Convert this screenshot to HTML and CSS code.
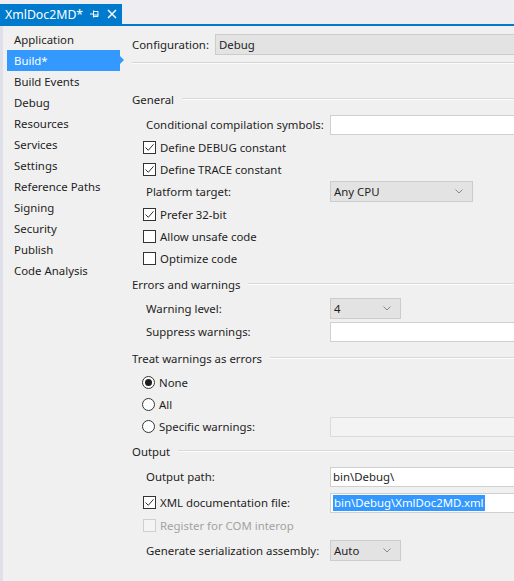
FILE: index.html
```html
<!DOCTYPE html>
<html lang="en">
<head>
    <meta charset="UTF-8">
    <title>XmlDoc2MD - Build</title>
    <link rel="stylesheet" href="styles.css">
</head>
<body>
    <div class="tabstrip">
        <div class="tab">
            <span class="tab-title">XmlDoc2MD*</span>
            <svg class="tab-pin" width="9" height="8" viewBox="0 0 9 8">
                <path d="M0 4h3M3.5 0.5v7M3.5 1.5h4.5v5h-4.5M3.5 5h4.5" fill="none" stroke="#fff" stroke-width="1"/>
            </svg>
            <svg class="tab-close" width="10" height="10" viewBox="0 0 10 10">
                <path d="M1 1l8 8M9 1l-8 8" stroke="#fff" stroke-width="1.5"/>
            </svg>
        </div>
    </div>

    <div class="main">
        <ul class="nav">
            <li>Application</li>
            <li class="active">Build*</li>
            <li>Build Events</li>
            <li>Debug</li>
            <li>Resources</li>
            <li>Services</li>
            <li>Settings</li>
            <li>Reference Paths</li>
            <li>Signing</li>
            <li>Security</li>
            <li>Publish</li>
            <li>Code Analysis</li>
        </ul>

        <div class="content">
            <div class="config-row">
                <span class="config-label">Configuration:</span>
                <div class="combo wide">Debug</div>
            </div>
            <div class="separator"></div>

            <!-- General -->
            <div class="section first">General<span class="rule"></span></div>
            <div class="row field">
                <span class="label">Conditional compilation symbols:</span>
                <div class="textbox wide"></div>
            </div>
            <div class="row">
                <span class="check on"><svg width="11" height="11" viewBox="0 0 11 11"><path d="M1.5 5.5l2.8 2.8 5.2-6" fill="none" stroke="#333" stroke-width="1"/></svg></span>
                <span>Define DEBUG constant</span>
            </div>
            <div class="row">
                <span class="check on"><svg width="11" height="11" viewBox="0 0 11 11"><path d="M1.5 5.5l2.8 2.8 5.2-6" fill="none" stroke="#333" stroke-width="1"/></svg></span>
                <span>Define TRACE constant</span>
            </div>
            <div class="row field">
                <span class="label">Platform target:</span>
                <div class="combo platform">Any CPU
                    <svg class="chevron" width="8" height="5" viewBox="0 0 8 5"><path d="M0.5 0.5l3.5 3.5 3.5-3.5" fill="none" stroke="#888" stroke-width="1"/></svg>
                </div>
            </div>
            <div class="row">
                <span class="check on"><svg width="11" height="11" viewBox="0 0 11 11"><path d="M1.5 5.5l2.8 2.8 5.2-6" fill="none" stroke="#333" stroke-width="1"/></svg></span>
                <span>Prefer 32-bit</span>
            </div>
            <div class="row">
                <span class="check"></span>
                <span>Allow unsafe code</span>
            </div>
            <div class="row">
                <span class="check"></span>
                <span>Optimize code</span>
            </div>

            <!-- Errors and warnings -->
            <div class="section">Errors and warnings<span class="rule"></span></div>
            <div class="row field">
                <span class="label">Warning level:</span>
                <div class="combo small">4
                    <svg class="chevron" width="8" height="5" viewBox="0 0 8 5"><path d="M0.5 0.5l3.5 3.5 3.5-3.5" fill="none" stroke="#888" stroke-width="1"/></svg>
                </div>
            </div>
            <div class="row field">
                <span class="label">Suppress warnings:</span>
                <div class="textbox wide"></div>
            </div>

            <!-- Treat warnings as errors -->
            <div class="section">Treat warnings as errors<span class="rule"></span></div>
            <div class="row radio-row">
                <span class="radio on"></span>
                <span>None</span>
            </div>
            <div class="row radio-row">
                <span class="radio"></span>
                <span>All</span>
            </div>
            <div class="row field radio-row">
                <span class="radio"></span>
                <span class="radio-label">Specific warnings:</span>
                <div class="textbox wide disabled"></div>
            </div>

            <!-- Output -->
            <div class="section tight">Output<span class="rule"></span></div>
            <div class="row field spaced">
                <span class="label">Output path:</span>
                <div class="textbox wide">bin\Debug\</div>
            </div>
            <div class="row field spaced">
                <span class="check on"><svg width="11" height="11" viewBox="0 0 11 11"><path d="M1.5 5.5l2.8 2.8 5.2-6" fill="none" stroke="#333" stroke-width="1"/></svg></span>
                <span class="check-label">XML documentation file:</span>
                <div class="textbox wide"><span class="selected">bin\Debug\XmlDoc2MD.xml</span></div>
            </div>
            <div class="row disabled-row">
                <span class="check off"></span>
                <span>Register for COM interop</span>
            </div>
            <div class="row field spaced">
                <span class="label">Generate serialization assembly:</span>
                <div class="combo small">Auto
                    <svg class="chevron" width="8" height="5" viewBox="0 0 8 5"><path d="M0.5 0.5l3.5 3.5 3.5-3.5" fill="none" stroke="#888" stroke-width="1"/></svg>
                </div>
            </div>
        </div>
    </div>
</body>
</html>
```

FILE: styles.css
```css
* {
    box-sizing: border-box;
}
body {
    margin: 0;
    padding: 0;
    width: 514px;
    height: 581px;
    overflow: hidden;
    background: #f0f0f0;
    color: #1e1e1e;
    font-family: "Noto Sans", "Liberation Sans", sans-serif;
    font-size: 11.4px;
}

/* tab strip */
.tabstrip {
    height: 26px;
    background: #eeeef2;
    border-bottom: 2px solid #007acc;
    display: flex;
    align-items: flex-end;
}
.tab {
    display: flex;
    align-items: center;
    height: 20px;
    width: 122px;
    padding-left: 5px;
    background: #007acc;
    color: #fff;
    font-size: 12.3px;
}
.tab-title {
    width: 85px;
}
.tab-pin {
    margin-right: 8px;
}

/* main area */
.main {
    display: flex;
    height: 555px;
    border-left: 3px solid #e0e0ea;
}
.nav {
    list-style: none;
    margin: 0;
    padding: 3px 12px 0 4px;
    width: 129px;
    flex-shrink: 0;
}
.nav li {
    height: 21px;
    line-height: 21px;
    padding-left: 7px;
    white-space: nowrap;
}
.nav li.active {
    position: relative;
    background: #3399ff;
    color: #fff;
}
.nav li.active::after {
    content: "";
    position: absolute;
    right: -4px;
    top: 6px;
    border-left: 4px solid #3399ff;
    border-top: 4px solid transparent;
    border-bottom: 4px solid transparent;
}

.content {
    flex: 1;
    overflow: hidden;
}

/* configuration */
.config-row {
    display: flex;
    align-items: center;
    height: 21px;
    margin-top: 8px;
}
.config-label {
    width: 83px;
    flex-shrink: 0;
}
.separator {
    margin: 7px 0 0 -2px;
    border-top: 1px solid #d5d5d5;
    border-bottom: 1px solid #fcfcfc;
}

/* sections */
.section {
    display: flex;
    align-items: center;
    height: 22px;
    margin: 4px 0 2px;
    white-space: nowrap;
}
.section.first {
    margin-top: 24px;
    margin-bottom: 3px;
}
.section.tight {
    margin-top: 2px;
}
.rule {
    flex: 1;
    margin-left: 8px;
    border-top: 1px solid #d9d9d9;
    border-bottom: 1px solid #fcfcfc;
}

/* rows */
.row {
    display: flex;
    align-items: center;
    height: 22px;
    white-space: nowrap;
}
.row.field {
    height: 23px;
}
.row.spaced {
    margin-top: 3px;
}
.label {
    width: 198px;
    padding-left: 14px;
    flex-shrink: 0;
}
.check-label {
    width: 170px;
    flex-shrink: 0;
}
.radio-label {
    width: 171px;
    flex-shrink: 0;
}

.check {
    width: 13px;
    height: 13px;
    margin: 0 4px 0 11px;
    border: 1px solid #333;
    background: #fff;
    display: flex;
    align-items: center;
    justify-content: center;
    flex-shrink: 0;
}
.check.off {
    border-color: #cfcfcf;
    background: #f4f4f4;
}
.disabled-row {
    color: #a2a2a2;
}

.radio {
    width: 13px;
    height: 13px;
    margin: 0 4px 0 10px;
    border: 1px solid #333;
    border-radius: 50%;
    background: #fff;
    flex-shrink: 0;
    display: flex;
    align-items: center;
    justify-content: center;
}
.radio.on::before {
    content: "";
    width: 7px;
    height: 7px;
    border-radius: 50%;
    background: #1e1e1e;
}

/* inputs */
.textbox {
    height: 20px;
    line-height: 18px;
    padding-left: 2px;
    background: #fff;
    border: 1px solid #d0d0d0;
}
.textbox.disabled {
    background: #f3f3f3;
    border-color: #dadada;
}
.wide {
    flex: 1;
    margin-right: -4px;
}
.selected {
    display: inline-block;
    line-height: 16px;
    padding: 0 1px;
    background: #3399ff;
    color: #fff;
}
.combo {
    position: relative;
    height: 21px;
    line-height: 19px;
    padding-left: 3px;
    background: #e3e3e3;
    border: 1px solid #cccccc;
}
.combo.platform {
    width: 143px;
}
.combo.small {
    width: 71px;
}
.chevron {
    position: absolute;
    right: 9px;
    top: 7px;
}
```
